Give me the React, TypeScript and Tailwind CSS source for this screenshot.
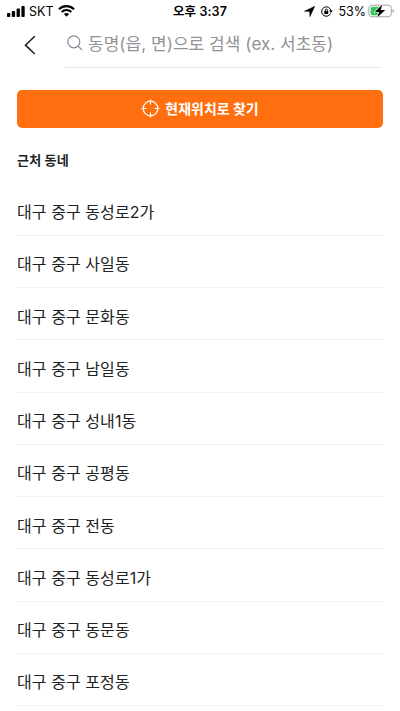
import { useState } from "react";

const neighborhoods = [
  "대구 중구 동성로2가",
  "대구 중구 사일동",
  "대구 중구 문화동",
  "대구 중구 남일동",
  "대구 중구 성내1동",
  "대구 중구 공평동",
  "대구 중구 전동",
  "대구 중구 동성로1가",
  "대구 중구 동문동",
  "대구 중구 포정동",
];

function StatusBar() {
  return (
    <div className="grid h-[22px] grid-cols-3 items-center text-black">
      <div className="flex items-center pl-[7px]">
        <svg width="18" height="11" viewBox="0 0 18 11" fill="currentColor">
          <rect x="0" y="7" width="3.3" height="4" rx="0.8" />
          <rect x="4.8" y="5" width="3.3" height="6" rx="0.8" />
          <rect x="9.6" y="2.6" width="3.3" height="8.4" rx="0.8" />
          <rect x="14.4" y="0" width="3.3" height="11" rx="0.8" />
        </svg>
        <span className="ml-1 pt-0.5 text-[12.5px] leading-none">SKT</span>
        <svg className="ml-[4px]" width="17" height="12" viewBox="0 0 17 12" fill="none" stroke="currentColor">
          <path d="M1 4.2a10.7 10.7 0 0 1 15 0" strokeWidth="2.2" />
          <path d="M3.7 7a6.8 6.8 0 0 1 9.6 0" strokeWidth="2.1" />
          <path d="M8.5 11.7 5.9 9.1a3.8 3.8 0 0 1 5.2 0z" fill="currentColor" stroke="none" />
        </svg>
      </div>
      <span className="pt-[3px] text-center text-[12.5px] leading-none font-semibold tracking-[0.1px]">
        오후 3:37
      </span>
      <div className="flex items-center justify-end pr-[6px]">
        <svg width="11" height="11" viewBox="0 0 10 10" fill="currentColor">
          <path d="M9.8.2 5.4 9.7 5 5 .3 4.8z" stroke="currentColor" strokeWidth="0.4" />
        </svg>
        <svg className="ml-[6px]" width="12" height="11" viewBox="0 0 12 11" fill="none" stroke="currentColor">
          <path d="M9.6 7.5A4.7 4.7 0 1 1 10 5" strokeWidth="1" />
          <path d="M8.1 4.6h3.6L10 7z" fill="currentColor" stroke="none" />
          <rect x="3.3" y="5" width="4" height="3" rx="0.4" fill="currentColor" stroke="none" />
          <path d="M4.2 5.2V4.1a1.1 1.1 0 0 1 2.2 0v1.1" strokeWidth="0.9" />
        </svg>
        <span className="ml-[5px] pt-0.5 text-[12.5px] leading-none">53%</span>
        <svg className="ml-[2px]" width="26" height="14" viewBox="0 0 26 14">
          <rect x="0.8" y="1.2" width="22.5" height="11.6" rx="3.2" fill="#fff" stroke="#a3a3a3" />
          <path d="M4.300 2.700H12.500v8.600H4.300a1.700 1.700 0 0 1-1.700-1.700V4.400a1.700 1.700 0 0 1 1.700-1.700z" fill="#35c759" />
          <path d="M24.600 5v4c.8-.3 1.300-1.100 1.300-2s-.5-1.700-1.300-2z" fill="#a3a3a3" />
          <path
            d="M14.400.4 6.800 7.900h4.400L9.100 13.600l8.200-7.700h-4.600z"
            fill="#000"
            stroke="#fff"
            strokeWidth="1.2"
            paintOrder="stroke"
          />
        </svg>
      </div>
    </div>
  );
}

function SearchHeader() {
  const [query, setQuery] = useState("");

  return (
    <header className="flex h-[46px] pr-[19px]">
      <button type="button" aria-label="뒤로" className="w-[65px] shrink-0 pl-6">
        <svg width="12" height="20" viewBox="0 0 12 20" fill="none" stroke="#222" strokeWidth="1.6">
          <path d="M10.8 1.2 1.5 10.2l9.3 8.8" />
        </svg>
      </button>
      <label className="flex min-w-0 flex-1 items-center border-b border-[#e4e5e7] pl-[2px]">
        <svg
          className="mb-[3px] shrink-0"
          width="16"
          height="16"
          viewBox="0 0 16 16"
          fill="none"
          stroke="#868b94"
          strokeWidth="1.2"
        >
          <circle cx="6.8" cy="6.8" r="6" />
          <path d="m11.2 11.2 4 4" />
        </svg>
        <input
          className="ml-[5px] min-w-0 flex-1 bg-transparent text-[17px] tracking-[0.03px] text-[#222] outline-none placeholder:text-[#929296]"
          placeholder="동명(읍, 면)으로 검색 (ex. 서초동)"
          value={query}
          onChange={(e) => setQuery(e.target.value)}
        />
      </label>
    </header>
  );
}

export default function App() {
  return (
    <div className="h-[711px] w-[400px] overflow-hidden bg-white font-['Inter','Noto_Sans_CJK_KR',sans-serif] text-[#222]">
      <StatusBar />
      <SearchHeader />
      <main className="px-[17px] pt-[22px]">
        <button
          type="button"
          className="flex h-[38px] w-full items-center justify-center gap-[5px] rounded-[5px] bg-[#ff6f0f] pb-px text-[14px] font-bold text-white"
        >
          <svg width="19" height="19" viewBox="0 0 19 19" fill="none" stroke="currentColor" strokeWidth="1.2">
            <circle cx="9.5" cy="9.5" r="7.3" />
            <path d="M9.5 .5v5M9.5 13.5v5M.5 9.5h5M13.5 9.5h5" />
          </svg>
          현재위치로 찾기
        </button>
        <h2 className="mt-[22px] text-[13px] leading-5 font-bold tracking-[0.2px]">근처 동네</h2>
        <ul className="mt-[13.5px]">
          {neighborhoods.map((name) => (
            <li
              key={name}
              className="flex h-[52.25px] items-center border-b border-[#f1f1f2] pt-[6px] text-[16px] tracking-[0.07px]"
            >
              {name}
            </li>
          ))}
        </ul>
      </main>
    </div>
  );
}
